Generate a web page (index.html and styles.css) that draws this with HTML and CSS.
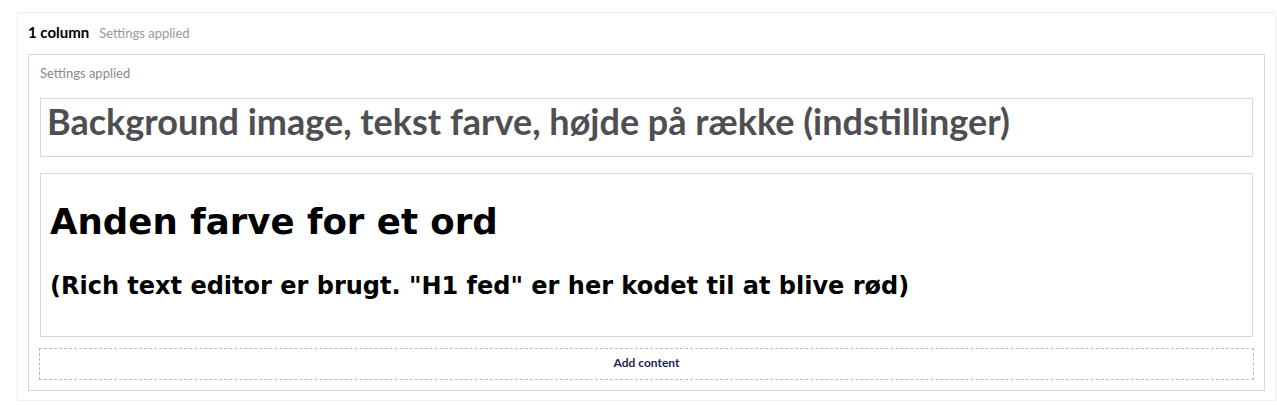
FILE: index.html
```html
<!DOCTYPE html>
<html lang="en">
<head>
  <meta charset="UTF-8">
  <title>1 column</title>
  <link rel="stylesheet" href="styles.css">
</head>
<body>
  <div class="row">
    <div class="row-head">
      <span class="row-title">1 column</span>
      <span class="row-meta">Settings applied</span>
    </div>
    <div class="column">
      <div class="column-meta">Settings applied</div>
      <div class="block block-heading">
        <h1 class="lead">Background image, tekst farve, højde på række (indstillinger)</h1>
      </div>
      <div class="block block-rte">
        <h1>Anden farve for et ord</h1>
        <h2>(Rich text editor er brugt. "H1 fed" er her kodet til at blive rød)</h2>
      </div>
      <div class="add-content">Add content</div>
    </div>
  </div>
</body>
</html>
```

FILE: styles.css
```css
* {
  box-sizing: border-box;
  margin: 0;
  padding: 0;
}
body {
  font-family: Lato, 'Open Sans', sans-serif;
  background-color: #fff;
  color: #1b264f;
}
.row {
  margin: 12px 1px 0 17px;
  height: 389px;
  border: 1px solid #f1f1f1;
  padding: 0 10px;
  display: flex;
  flex-direction: column;
}
.row-head {
  height: 41px;
  display: flex;
  align-items: baseline;
  gap: 10px;
  padding-top: 10px;
  line-height: 1.2;
}
.row-title {
  font-size: 15px;
  font-weight: 700;
  color: #000;
}
.row-meta {
  font-size: 13px;
  color: #999;
}
.column {
  border: 1px solid #d8d8d8;
  padding: 0 11px 10px;
  display: flex;
  flex-direction: column;
}
.column-meta {
  font-size: 13px;
  line-height: 1.2;
  color: #8a8a8a;
  height: 43px;
  padding-top: 11px;
}
.block {
  border: 1px solid #d8d8d8;
}
.block-heading {
  height: 59px;
  padding: 4px 6px 0;
}
.lead {
  font-size: 36px;
  font-weight: 700;
  color: #4f4f53;
  line-height: 1;
}
.block-rte {
  margin-top: 16px;
  height: 164px;
  padding: 0 9px;
  font-family: Verdana, 'DejaVu Sans', sans-serif;
  color: #000;
}
.block-rte h1 {
  font-size: 35.6px;
  margin-top: 27px;
  line-height: 1.2;
}
.block-rte h2 {
  font-size: 24px;
  margin-top: 28px;
  line-height: 1.2;
}
.add-content {
  margin: 11px -1px 0;
  height: 32px;
  border: 1px dashed #bbb;
  display: flex;
  align-items: center;
  justify-content: center;
  padding-bottom: 3px;
  font-size: 12px;
  font-weight: 700;
  color: #1b264f;
}
```
